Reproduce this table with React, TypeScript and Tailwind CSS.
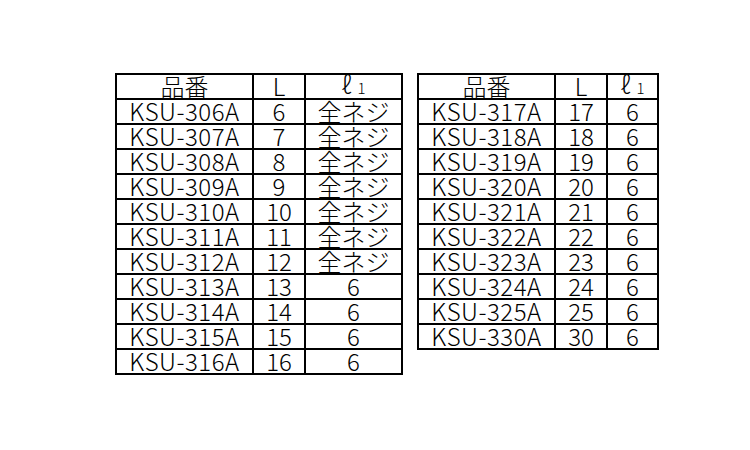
const left: [string, string, string][] = [
  ["KSU-306A", "6", "全ネジ"],
  ["KSU-307A", "7", "全ネジ"],
  ["KSU-308A", "8", "全ネジ"],
  ["KSU-309A", "9", "全ネジ"],
  ["KSU-310A", "10", "全ネジ"],
  ["KSU-311A", "11", "全ネジ"],
  ["KSU-312A", "12", "全ネジ"],
  ["KSU-313A", "13", "6"],
  ["KSU-314A", "14", "6"],
  ["KSU-315A", "15", "6"],
  ["KSU-316A", "16", "6"],
];

const right: [string, string, string][] = [
  ["KSU-317A", "17", "6"],
  ["KSU-318A", "18", "6"],
  ["KSU-319A", "19", "6"],
  ["KSU-320A", "20", "6"],
  ["KSU-321A", "21", "6"],
  ["KSU-322A", "22", "6"],
  ["KSU-323A", "23", "6"],
  ["KSU-324A", "24", "6"],
  ["KSU-325A", "25", "6"],
  ["KSU-330A", "30", "6"],
];

function SpecTable({ rows, widths }: { rows: [string, string, string][]; widths: number[] }) {
  const cell = "h-[25px] p-0 pb-[2px] border-2 border-black text-center align-middle leading-[17px]";
  return (
    <table className="border-collapse table-fixed">
      <colgroup>
        {widths.map((w, i) => (
          <col key={i} style={{ width: w }} />
        ))}
      </colgroup>
      <thead>
        <tr>
          <th className={`${cell} font-light`}>品番</th>
          <th className={`${cell} font-light`}>L</th>
          <th className={`${cell} font-light`}>
            <span>ℓ</span>
            <span className="ml-[6px] text-[15px]">1</span>
          </th>
        </tr>
      </thead>
      <tbody>
        {rows.map(([code, len, thread]) => (
          <tr key={code}>
            <td className={`${cell} tracking-[0.5px]`}>{code}</td>
            <td className={cell}>{len}</td>
            <td className={cell}>{thread}</td>
          </tr>
        ))}
      </tbody>
    </table>
  );
}

export default function App() {
  return (
    <div
      className="w-[750px] h-[450px] bg-white text-black text-[24px] font-light flex items-start gap-[14px] pl-[115px] pt-[73px]"
      style={{ fontFamily: '"Noto Sans CJK JP", "Noto Sans", sans-serif' }}
    >
      <SpecTable rows={left} widths={[137, 52, 97]} />
      <SpecTable rows={right} widths={[137, 52, 51]} />
    </div>
  );
}
